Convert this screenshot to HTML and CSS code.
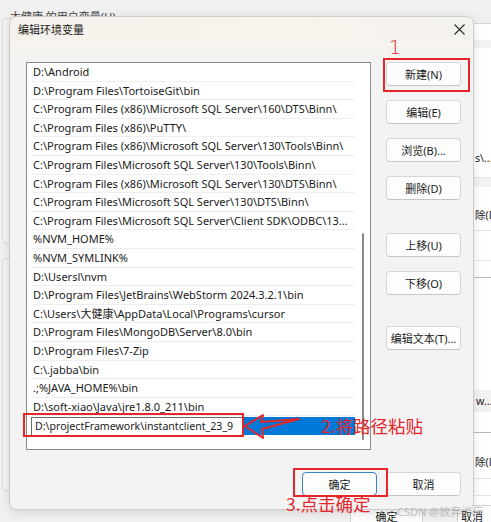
FILE: index.html
```html
<!DOCTYPE html>
<html lang="zh-CN">
<head>
    <meta charset="UTF-8">
    <meta name="viewport" content="width=device-width, initial-scale=1.0">
    <title>编辑环境变量</title>
    <link rel="stylesheet" href="styles.css">
</head>
<body>
    <!-- janela de fundo -->
    <div class="bg-caption">大健康 的用户变量(U)</div>
    <div class="bg-box bg-box-top"></div>
    <div class="bg-box bg-box-bottom"></div>
    <div class="bg-panel">
        <div class="sp" style="height: 16px;"></div>
        <div class="band" style="height: 8px;"></div>
        <div class="sp" style="height: 102px;"></div>
        <div class="cell">s\...</div>
        <div class="sp" style="height: 11px;"></div>
        <div class="band line" style="height: 10px;"></div>
        <div class="sp" style="height: 20px;"></div>
        <div class="cell">除(D)</div>
        <div class="sp" style="height: 7px;"></div>
        <div class="line" style="height: 30px;"></div>
        <div class="line" style="height: 17px;"></div>
        <div class="line dark" style="height: 113px;"></div>
        <div class="band cell-band">w...</div>
        <div class="sp" style="height: 20px;"></div>
        <div class="line dark" style="height: 22px;"></div>
        <div class="cell">除(L)</div>
        <div class="sp" style="height: 8px;"></div>
        <div class="line" style="height: 17px;"></div>
        <div class="line" style="height: 20px;"></div>
    </div>
    <div class="bg-btn bg-ok">确定</div>
    <div class="bg-btn bg-cancel">取消</div>

    <div class="dialog">
        <div class="titlebar">
            <span class="title">编辑环境变量</span>
            <svg class="close" width="11" height="11" viewBox="0 0 11 11">
                <path d="M0.5 0.5 L10.5 10.5 M10.5 0.5 L0.5 10.5" stroke="#2b2b2b" stroke-width="1.1" fill="none"/>
            </svg>
        </div>
        <div class="content">
            <div class="lista">
                <div class="rows">
                    <div class="row">D:\Android</div>
                    <div class="row">D:\Program Files\TortoiseGit\bin</div>
                    <div class="row">C:\Program Files (x86)\Microsoft SQL Server\160\DTS\Binn\</div>
                    <div class="row">C:\Program Files (x86)\PuTTY\</div>
                    <div class="row">C:\Program Files (x86)\Microsoft SQL Server\130\Tools\Binn\</div>
                    <div class="row">C:\Program Files\Microsoft SQL Server\130\Tools\Binn\</div>
                    <div class="row">C:\Program Files (x86)\Microsoft SQL Server\130\DTS\Binn\</div>
                    <div class="row">C:\Program Files\Microsoft SQL Server\130\DTS\Binn\</div>
                    <div class="row">C:\Program Files\Microsoft SQL Server\Client SDK\ODBC\13...</div>
                    <div class="row">%NVM_HOME%</div>
                    <div class="row">%NVM_SYMLINK%</div>
                    <div class="row">D:\Usersl\nvm</div>
                    <div class="row">D:\Program Files\JetBrains\WebStorm 2024.3.2.1\bin</div>
                    <div class="row">C:\Users\大健康\AppData\Local\Programs\cursor</div>
                    <div class="row">D:\Program Files\MongoDB\Server\8.0\bin</div>
                    <div class="row">D:\Program Files\7-Zip</div>
                    <div class="row">C:\.jabba\bin</div>
                    <div class="row">.;%JAVA_HOME%\bin</div>
                    <div class="row">D:\soft-xiao\Java\jre1.8.0_211\bin</div>
                    <div class="row editando">
                        <div class="campo">D:\projectFramework\instantclient_23_9</div>
                    </div>
                </div>
                <div class="trilho"><div class="thumb"></div></div>
            </div>
            <div class="lateral">
                <button class="botao">新建(N)</button>
                <button class="botao">编辑(E)</button>
                <button class="botao">浏览(B)...</button>
                <button class="botao">删除(D)</button>
                <button class="botao grupo">上移(U)</button>
                <button class="botao">下移(O)</button>
                <button class="botao grupo2">编辑文本(T)...</button>
            </div>
        </div>
        <div class="rodape">
            <button class="botao padrao">确定</button>
            <button class="botao">取消</button>
        </div>
    </div>

    <!-- anotacoes em vermelho -->
    <div class="nota-num">1</div>
    <div class="caixa caixa-novo"></div>
    <div class="caixa caixa-campo"></div>
    <svg class="seta" width="60" height="30" viewBox="0 0 60 30">
        <path d="M2 13 L20 2 L18 9 L56 6 L19 16 L20 25 Z" stroke="#e5262b" stroke-width="2" fill="none" stroke-linejoin="round"/>
    </svg>
    <div class="nota nota-2">2.将路径粘贴</div>
    <div class="caixa caixa-ok"></div>
    <div class="nota nota-3">3.点击确定</div>
    <div class="marca">CSDN @放弃治疗</div>
</body>
</html>
```

FILE: styles.css
```css
* {
    margin: 0;
    padding: 0;
    box-sizing: border-box;
}
body {
    width: 491px;
    height: 522px;
    overflow: hidden;
    position: relative;
    background-color: #f0f0f0;
    font-family: "Noto Sans", "Noto Sans CJK SC", sans-serif;
    font-size: 11px;
    color: #1a1a1a;
}

/* janela de fundo */
.bg-caption {
    position: absolute;
    left: 10px;
    top: 10px;
    font-size: 11px;
    line-height: 13px;
    color: #444;
}
.bg-box {
    position: absolute;
    left: 2px;
    width: 40px;
    border: 1px solid #dadada;
    border-radius: 4px;
    background-color: #f3f3f3;
}
.bg-box-top {
    top: 18px;
    height: 226px;
}
.bg-box-bottom {
    top: 258px;
    height: 233px;
}
.bg-panel {
    position: absolute;
    left: 474px;
    top: 23px;
    width: 30px;
    height: 490px;
    background-color: white;
    border-top: 1px solid #d6d6d6;
    overflow: hidden;
    font-size: 10.6px;
}
.bg-panel .band {
    background-color: #f2f2f2;
}
.bg-panel .line {
    border-top: 1px solid #e4e4e4;
}
.bg-panel .line.dark {
    border-top-color: #b9b9b9;
}
.bg-panel .cell {
    height: 16px;
    line-height: 16px;
    white-space: nowrap;
    padding-left: 1px;
}
.bg-panel .cell-band {
    height: 22px;
    line-height: 22px;
    padding-left: 2px;
}
.bg-btn {
    position: absolute;
    top: 505px;
    height: 26px;
    background-color: #fbfbfb;
    border: 1px solid #d4d4d4;
    border-radius: 4px;
    text-align: center;
    line-height: 22px;
}
.bg-ok {
    left: 350px;
    width: 73px;
}
.bg-cancel {
    left: 457px;
    width: 40px;
    text-align: left;
    padding-left: 3px;
}

/* dialogo */
.dialog {
    position: absolute;
    left: 9px;
    top: 16px;
    width: 465px;
    height: 494px;
    background-color: #f3f3f3;
    border: 1px solid #cdcdcd;
    border-radius: 8px;
    box-shadow: 0 2px 10px rgba(0, 0, 0, 0.12);
    display: flex;
    flex-direction: column;
    overflow: hidden;
}
.titlebar {
    height: 24px;
    display: flex;
    align-items: center;
    justify-content: space-between;
    padding: 0 8px 0 8px;
    background: linear-gradient(90deg, #f5f1ec, #f8f3ec 60%, #f4f2ef);
}
.title {
    font-size: 11px;
    color: #1a1a1a;
}
.content {
    display: flex;
    gap: 15px;
    padding: 21px 12px 0 16px;
    background: linear-gradient(180deg, #f6f3ef, #f3f3f3 30px);
}
.lista {
    width: 345px;
    height: 388px;
    background-color: white;
    border: 1px solid #8a8a8a;
    display: flex;
}
.rows {
    flex: 1;
    padding-left: 4px;
}
.row {
    height: 18.6px;
    line-height: 18px;
    padding-left: 2px;
    border-bottom: 1px solid #eeeeee;
    white-space: nowrap;
    overflow: hidden;
}
.row.editando {
    height: 18px;
    margin-top: 0.5px;
    padding-left: 0;
    border-bottom: none;
    background-color: #0078d7;
    display: flex;
}
.campo {
    width: 212px;
    height: 19px;
    margin-top: 0.5px;
    background-color: white;
    border: 1px solid #6b6b6b;
    padding-left: 3px;
    font-size: 10.6px;
    line-height: 16px;
    white-space: nowrap;
    overflow: hidden;
}
.trilho {
    width: 15px;
}
.thumb {
    width: 2px;
    height: 207px;
    margin: 170px 0 0 7px;
    background-color: #8a8a8a;
    border-radius: 1px;
}
.lateral {
    display: flex;
    flex-direction: column;
    gap: 14px;
}
.botao {
    width: 75px;
    height: 24px;
    background-color: #fdfdfd;
    border: 1px solid #d6d6d6;
    border-bottom-color: #c6c6c6;
    border-radius: 4px;
    font-family: inherit;
    font-size: 11px;
    color: #1a1a1a;
}
.grupo {
    margin-top: 19px;
}
.grupo2 {
    margin-top: 17px;
}
.rodape {
    display: flex;
    justify-content: flex-end;
    gap: 9px;
    padding: 22px 12px 0 0;
}
.padrao {
    border: 1px solid #3b82c4;
}

/* anotacoes */
.caixa {
    position: absolute;
    border: 2px solid #e5262b;
}
.caixa-novo {
    left: 383px;
    top: 58px;
    width: 87px;
    height: 34px;
}
.caixa-campo {
    left: 23px;
    top: 413px;
    width: 221px;
    height: 24px;
}
.caixa-ok {
    left: 293px;
    top: 468px;
    width: 95px;
    height: 29px;
}
.nota-num {
    position: absolute;
    left: 389px;
    top: 36px;
    font-family: "DejaVu Sans", sans-serif;
    font-weight: 300;
    font-size: 19px;
    line-height: 22px;
    color: #e5262b;
}
.seta {
    position: absolute;
    left: 243px;
    top: 413px;
}
.nota {
    position: absolute;
    font-family: "Noto Sans CJK SC", sans-serif;
    font-size: 17.5px;
    line-height: 17px;
    color: #e5262b;
}
.nota-2 {
    left: 321px;
    top: 417px;
}
.nota-3 {
    left: 286px;
    top: 495px;
}
.marca {
    position: absolute;
    left: 397px;
    top: 503px;
    font-size: 11px;
    color: rgba(130, 130, 130, 0.45);
    white-space: nowrap;
}
```
